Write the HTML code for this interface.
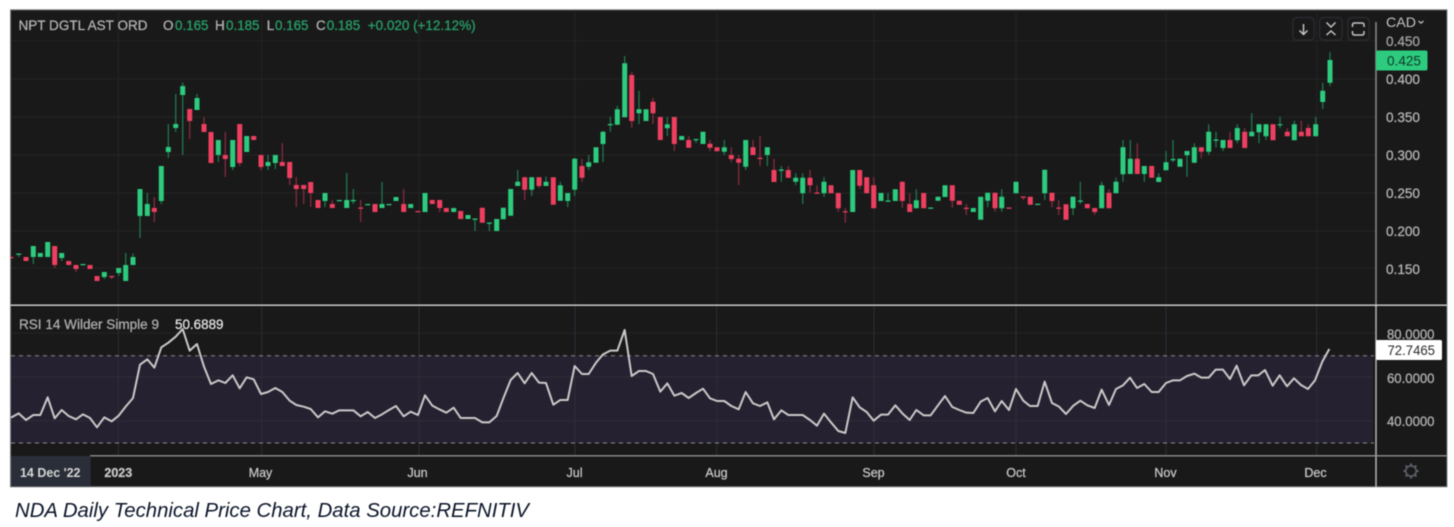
<!DOCTYPE html>
<html><head><meta charset="utf-8"><title>NDA Daily Technical Price Chart</title>
<style>
html,body{margin:0;padding:0;background:#fff;width:1454px;height:527px;overflow:hidden}
svg{position:absolute;left:0;top:0;filter:blur(.45px)}
text{font-family:"Liberation Sans",sans-serif}
.w text{stroke:currentColor;stroke-width:.25px}
</style></head><body>
<svg width="1454" height="527" viewBox="0 0 1454 527" xmlns="http://www.w3.org/2000/svg">
<rect width="1454" height="527" fill="#fff"/>
<rect x="10.5" y="9.8" width="1436.5" height="477" fill="#191919" stroke="#808080" stroke-width="1"/>
<!-- RSI band -->
<rect x="11" y="355.7" width="1362" height="87.5" fill="#262130"/>
<!-- grid -->
<path stroke="#252525" stroke-width="1" fill="none" d="M11 40.7H1376M11 79H1376M11 117H1376M11 155H1376M11 193H1376M11 231H1376M11 268H1376M11 333H1376M118.3 10V305M261.7 10V305M419 10V305M575 10V305M716.7 10V305M874 10V305M1016 10V305M1166 10V305M1316.7 10V305"/>
<path stroke="#302c39" stroke-width="1" fill="none" d="M11 377H1373M11 420.7H1373M118.3 306V455M261.7 306V455M419 306V455M575 306V455M716.7 306V455M874 306V455M1016 306V455M1166 306V455M1316.7 306V455"/>
<path stroke="#8a8a8a" stroke-width="1" stroke-dasharray="4 4" fill="none" d="M11 355.7H1374M11 443H1374"/>
<!-- wicks green -->
<path stroke="#1f7f52" stroke-width="1.2" fill="none" d="M18.7 254V257M33.3 246V264M61.7 253V261M104.3 272V279M118.7 268V276M125.7 253V281M133 253.5V265M140 189V238M147.3 193V216M161.3 166V204M168.3 124V158M175.7 94V132M182.7 82.5V155M197 94V110M218.3 140V162M232.7 140V170M268 155V170M275.3 155V169M325 193V207M346.7 173V208M353.3 189V204M382 182V208M475 219V231M489.3 223V231M517.7 170V186M531.7 177V196M546 176.7V186M560.3 181.7V201M567.7 193V207M574.7 158V196M588.7 155V170M603 131V162M610.3 116.7V131.7M617.3 105.7V125M624.7 56V117M639 90.7V124M667.3 116.7V136M696 139.7V143M724.3 140V155M745.7 140V170M767.3 147V166M781.3 166V181.7M795.7 173.3V185.3M802.7 173.3V204M824 177.3V196.7M888 193V201M916.3 189.3V208M987.7 192.7V207M1001.7 189.3V211.7M1044.7 169.7V200M1073 196.7V215M1080.3 181.7V204M1101.7 181.7V208M1116 177.7V193M1123 140V181.7M1130.3 140V174M1144.3 166V181.7M1158.7 173.3V182M1166 151V170M1173 140V162.3M1187 151V176.7M1194.3 143.3V163M1208.7 124.3V155M1216 131.7V147.3M1223 140V151M1237.3 124.3V143.3M1251.7 113.3V136M1259 124V143.3M1266 124V140M1280 116.7V128.3M1294.3 120.7V140M1315.7 116.7V136M1322.7 82.7V109M1330 52.3V86"/>
<!-- wicks red -->
<path stroke="#8d2d42" stroke-width="1.2" fill="none" d="M54.7 246V268M76 265V272M111.7 276V279M154.3 197V222M189.7 109V139M204 117V132M225.3 132V177M239.7 124V166M261 155V170M282.3 143V166M289.7 162V185M296.3 177V207M303.7 185V204M310.7 182V207M332.3 200V208M360.7 200V222M403.7 189V212M439.7 200V212M524.7 177V200M539 177V188M582 158.7V181.7M631.7 71.7V127.7M653 97.7V124M674.3 117V151M688.7 136V148M710 140V151M731.3 147.3V162.3M738.7 155V185M753 140V155M760 136V166M774 158.7V182M788.3 166V178M810 170V192.7M817 185.3V193M838.3 193V211.7M845.3 207.7V222.7M859.7 170V189M873.7 177.3V208M902.3 181.7V207.7M909.7 193.3V212M952.3 185.3V207.7M966.3 204V215M995 192.7V211.7M1023.3 197V200M1052 192.7V207.3M1058.7 200.3V215M1094.7 208V215M1109 189.3V208M1137.3 143.3V174M1201.3 147.3V158.3M1230 131.7V148M1244.7 128.3V148M1287.3 128.3V136M1301.3 120.7V136M1308.3 124.3V136"/>
<!-- bodies green -->
<path stroke="#2ccb7e" stroke-width="5" fill="none" d="M18.7 253.5V254.8M33.3 246V257M40.3 253V257M47.7 242V257M61.7 253V258M83 264V265.3M104.3 272V277M118.7 268V273M125.7 265V281M133 257V265M140 189V216M147.3 204V216M161.3 166V201M168.3 147V152M175.7 124V128M182.7 86V95M197 98V110M218.3 140V155M232.7 140V167M246.7 136V152M268 162V166M275.3 155V163M325 193V201M339.3 200V201.3M346.7 200V208M353.3 200V201.3M367.7 204V205.3M382 204V208M389 204V205.3M396 197V201M410.7 204V208M425 193V212M453.7 208V212M468 215V219M475 218.5V219.8M489.3 222.5V223.8M496.7 219V231M503.3 207.7V219.3M510.7 189V215.7M517.7 181.7V186M531.7 177.3V189.7M546 181.7V186M560.3 185.3V200.7M567.7 193V201M574.7 158.7V189.7M588.7 162.3V166.7M596 147.3V162.7M603 131.7V144M610.3 124V125.3M617.3 109.3V124.7M624.7 63.3V117.3M639 109.3V113.3M646 109.3V121M667.3 124.3V128.3M681.7 136V140M696 139V140.3M703 131.7V144M724.3 147.3V151.7M745.7 140V166.7M767.3 147.3V155M781.3 169.5V170.8M795.7 177.7V181.7M802.7 177.7V193.3M824 181.7V193.3M852.7 170V212M881 193V201M888 200.5V201.8M895.3 189.3V201M916.3 200.3V208.3M930.7 207.5V208.8M938 196.7V200.7M945 185.3V197M973.3 208V212M980.7 196.7V219.7M987.7 192.7V200.7M1001.7 196.7V208.3M1016 181.7V193.3M1037.7 203.8V205M1044.7 169.7V193.3M1073 196.7V208.3M1080.3 200.5V201.8M1101.7 185.3V208.3M1116 181.7V193.3M1123 147.3V174.3M1130.3 158.7V174M1144.3 166V174M1158.7 177.3V182M1166 162.3V170.3M1173 159V160.3M1180 158.7V166.7M1187 151V155.3M1194.3 147.3V162.7M1208.7 131.7V151.7M1216 139.5V140.8M1223 140V148M1237.3 128V140.3M1251.7 131.7V136.3M1259 124.3V132.3M1266 124.3V136.3M1280 124.2V125.4M1294.3 124.3V140.3M1315.7 124.3V136.3M1322.7 90.7V102M1330 60V82.7"/>
<!-- bodies red -->
<path stroke="#ef3f60" stroke-width="5" fill="none" d="M11 257V258.3M26 257V261M54.7 246V265M68.7 261V265M76 265V269M90 265V269M97 276V281M111.7 276V277.3M154.3 208V212M189.7 109V121M204 124V132M211 132V163M225.3 155V159M239.7 124V163M253.7 136V140M261 155V167M282.3 162V166M289.7 162V178M296.3 185V189M303.7 185V189M310.7 182V193M318 200V208M332.3 204V208M360.7 207.5V208.8M375 204V212M403.7 204V212M418 211V212.3M432.3 200V204M439.7 200V208M446.3 208V212M460.7 211V219M482.3 207.7V222.7M524.7 177.3V189.7M539 177.3V186M553.3 177.3V204.7M582 166V177.7M631.7 75V121M653 101.7V113.3M660.3 117V140M674.3 117V144M688.7 140V147.7M710 143.7V147.7M717 147.3V151.3M731.3 155V159M738.7 158.7V162.7M753 147.3V155M760 157.8V159M774 170V182M788.3 170V177.7M810 177.7V185.3M817 192.5V193.8M831 185.3V193.3M838.3 193V208.3M845.3 211.2V212.4M859.7 170V185.7M866.7 177.3V193.3M873.7 185.3V208.3M902.3 181.7V201M909.7 204V212M923.7 193V208.3M952.3 185.3V200.7M959.3 200.7V204.7M966.3 207.7V209M995 192.7V208.3M1009 207.5V208.8M1023.3 196.5V197.8M1030.3 196.7V204.7M1052 192.7V201M1058.7 207.5V208.8M1066 204.3V219.7M1087.3 204V208.3M1094.7 208V212M1109 192.7V208.3M1137.3 158.7V174M1151.7 166V177.7M1201.3 147.3V151.7M1230 140V148M1244.7 131.7V148M1273 124.3V140.3M1287.3 131.7V136.3M1301.3 131.7V136.3M1308.3 128V136.3"/>
<rect x="0" y="240" width="10" height="30" fill="#fff"/>
<!-- separators -->
<path stroke="#858585" stroke-width="1.6" fill="none" d="M1376 22V305"/>
<path stroke="#b5b5b5" stroke-width="1.5" fill="none" d="M1376 305V487"/>
<path stroke="#d8d8d8" stroke-width="1.4" fill="none" d="M10.5 305.2H1447"/>
<path stroke="#8e8e8e" stroke-width="1.4" fill="none" d="M90 455.8H1447"/>
<!-- RSI line -->
<polyline transform="translate(0,300) scale(.33333)" fill="none" stroke="#c9c9c9" stroke-width="6" stroke-linejoin="round" points="33,353 56,340 78,360 100,345 121,345 143,292 164,355 185,330 206,348 228,358 249,343 270,354 291,382 313,352 335,364 356,347 377,320 399,294 420,194 442,178 463,203 484,142 505,128 527,110 548,87 569,152 591,132 612,200 633,252 655,241 676,249 698,226 719,265 740,232 761,238 783,282 804,276 826,264 847,276 869,302 889,315 911,320 932,327 954,352 975,334 997,341 1018,331 1040,331 1060,331 1082,349 1103,336 1125,354 1146,343 1167,330 1188,318 1211,349 1232,335 1254,345 1275,286 1297,317 1318,328 1339,338 1361,323 1382,354 1404,354 1425,354 1447,367 1468,367 1490,348 1510,295 1532,240 1553,219 1574,250 1595,219 1617,248 1638,249 1660,314 1681,300 1703,300 1724,198 1746,222 1766,222 1788,188 1809,163 1831,152 1852,152 1874,90 1895,228 1917,213 1938,213 1959,222 1981,275 2002,250 2023,287 2045,279 2066,294 2088,279 2109,266 2130,295 2151,303 2173,303 2194,318 2216,328 2237,276 2259,310 2280,318 2302,307 2322,358 2344,331 2365,345 2387,345 2408,345 2430,360 2451,377 2472,341 2493,367 2515,393 2536,399 2558,292 2579,322 2600,336 2621,362 2643,344 2664,344 2686,316 2707,340 2729,360 2749,330 2771,346 2792,346 2814,316 2835,288 2857,321 2878,330 2899,338 2920,339 2942,305 2963,294 2985,334 3005,303 3027,330 3048,267 3070,302 3090,318 3113,318 3134,245 3156,309 3177,320 3198,342 3220,317 3241,302 3262,316 3284,324 3305,269 3327,315 3348,267 3369,256 3390,233 3411,264 3433,252 3455,276 3476,276 3498,249 3519,241 3540,241 3561,228 3583,221 3604,233 3626,233 3647,209 3669,209 3690,237 3710,197 3732,256 3754,226 3775,226 3795,210 3818,257 3839,226 3861,259 3882,235 3903,255 3924,267 3945,241 3967,185 3988,147"/>
<!-- legend -->
<g class="w" font-size="13.5" fill="#b4b4b4" color="#b4b4b4">
<text x="18.5" y="30" textLength="129" lengthAdjust="spacingAndGlyphs">NPT DGTL AST ORD</text>
<text x="163" y="30">O</text><text x="215" y="30">H</text><text x="266.7" y="30">L</text><text x="316" y="30">C</text>
</g>
<g class="w" font-size="13.5" fill="#27a36a" color="#27a36a">
<text x="175" y="30" textLength="33.5" lengthAdjust="spacingAndGlyphs">0.165</text><text x="226" y="30" textLength="33.5" lengthAdjust="spacingAndGlyphs">0.185</text><text x="275" y="30" textLength="33.5" lengthAdjust="spacingAndGlyphs">0.165</text><text x="326.7" y="30" textLength="33.5" lengthAdjust="spacingAndGlyphs">0.185</text>
<text x="367.7" y="30" textLength="108" lengthAdjust="spacingAndGlyphs">+0.020 (+12.12%)</text>
</g>
<!-- icon boxes -->
<g fill="none" stroke="#2c2d33" stroke-width="1.2">
<rect x="1292.8" y="17.5" width="21.4" height="22.6" rx="4"/>
<rect x="1319.5" y="17.5" width="22.6" height="22.6" rx="4"/>
<rect x="1347.8" y="17.5" width="21.4" height="22.6" rx="4"/>
</g>
<g fill="none" stroke="#c4c4c4" stroke-width="1.5">
<path d="M1303.5 24V34.5M1299.5 30.5L1303.5 34.5L1307.5 30.5"/>
<path d="M1326.5 22.5L1331 27L1335.5 22.5M1326.5 35L1331 31L1335.5 35"/>
<path d="M1352.5 27V25Q1352.5 23 1354.5 23H1362Q1364 23 1364 25V27M1352.5 31V33Q1352.5 35 1354.5 35H1362Q1364 35 1364 33V31"/>
</g>
<!-- price axis -->
<text x="1386" y="27" font-size="14" fill="#c4c4c4" textLength="30" lengthAdjust="spacingAndGlyphs">CAD</text>
<path d="M1418.5 21L1421 23.2L1423.5 21" fill="none" stroke="#c4c4c4" stroke-width="1.2"/>
<g class="w" font-size="14" fill="#b8b8b8" color="#b8b8b8">
<text x="1386" y="46" textLength="34" lengthAdjust="spacingAndGlyphs" fill="#9c9c9c">0.450</text>
<text x="1386" y="84" textLength="34" lengthAdjust="spacingAndGlyphs">0.400</text>
<text x="1386" y="122" textLength="34" lengthAdjust="spacingAndGlyphs">0.350</text>
<text x="1386" y="160" textLength="34" lengthAdjust="spacingAndGlyphs">0.300</text>
<text x="1386" y="198" textLength="34" lengthAdjust="spacingAndGlyphs">0.250</text>
<text x="1386" y="236" textLength="34" lengthAdjust="spacingAndGlyphs">0.200</text>
<text x="1386" y="274" textLength="34" lengthAdjust="spacingAndGlyphs">0.150</text>
</g>
<rect x="1376" y="50.5" width="51.5" height="20" rx="2" fill="#2ccb7e"/>
<text x="1387" y="65.5" font-size="14" fill="#0f3a26" textLength="34" lengthAdjust="spacingAndGlyphs">0.425</text>
<!-- RSI labels -->
<g class="w" color="#b0b0b0"><text x="19" y="329" font-size="13.5" fill="#b0b0b0" textLength="140" lengthAdjust="spacingAndGlyphs">RSI 14 Wilder Simple 9</text></g>
<g class="w" color="#e6e6e6"><text x="175" y="329" font-size="13.5" fill="#e6e6e6" textLength="48.5" lengthAdjust="spacingAndGlyphs">50.6889</text></g>
<g class="w" font-size="13.5" fill="#b4b4b4" color="#b4b4b4">
<text x="1387" y="339" textLength="47.5" lengthAdjust="spacingAndGlyphs">80.0000</text>
<text x="1387" y="383" textLength="47.5" lengthAdjust="spacingAndGlyphs">60.0000</text>
<text x="1387" y="426" textLength="47.5" lengthAdjust="spacingAndGlyphs">40.0000</text>
</g>
<rect x="1376" y="340" width="66" height="20" rx="1.5" fill="#fff"/>
<text x="1387.5" y="355" font-size="13.5" fill="#2a2a2a" textLength="47.5" lengthAdjust="spacingAndGlyphs">72.7465</text>
<!-- time axis -->
<rect x="11" y="456" width="79.5" height="30.5" fill="#2a2e39"/>
<text x="20" y="477" font-size="12.5" font-weight="bold" fill="#d6d6d6" textLength="60.5" lengthAdjust="spacingAndGlyphs">14 Dec '22</text>
<g class="w" font-size="12.5" fill="#c8c8c8" color="#c8c8c8" text-anchor="middle">
<text x="118.3" y="477" font-weight="bold">2023</text>
<text x="260.5" y="477">May</text>
<text x="417.5" y="477">Jun</text>
<text x="574.5" y="477">Jul</text>
<text x="716.5" y="477">Aug</text>
<text x="873.5" y="477">Sep</text>
<text x="1016" y="477">Oct</text>
<text x="1165.5" y="477">Nov</text>
<text x="1315.5" y="477">Dec</text>
</g>
<!-- gear -->
<g fill="none" stroke="#5d606a">
<circle cx="1411" cy="471" r="5.2" stroke-width="1.6"/>
<path stroke-width="2" d="M1411 463.4V465.6M1411 476.4V478.6M1403.4 471H1405.6M1416.4 471H1418.6M1405.6 465.6L1407.2 467.2M1414.8 474.8L1416.4 476.4M1405.6 476.4L1407.2 474.8M1414.8 467.2L1416.4 465.6"/>
</g>
<!-- caption -->
<text x="15" y="517" font-size="20.5" font-style="italic" fill="#0a1428" textLength="514" lengthAdjust="spacingAndGlyphs">NDA Daily Technical Price Chart, Data Source:REFNITIV</text>
</svg>
</body></html>
